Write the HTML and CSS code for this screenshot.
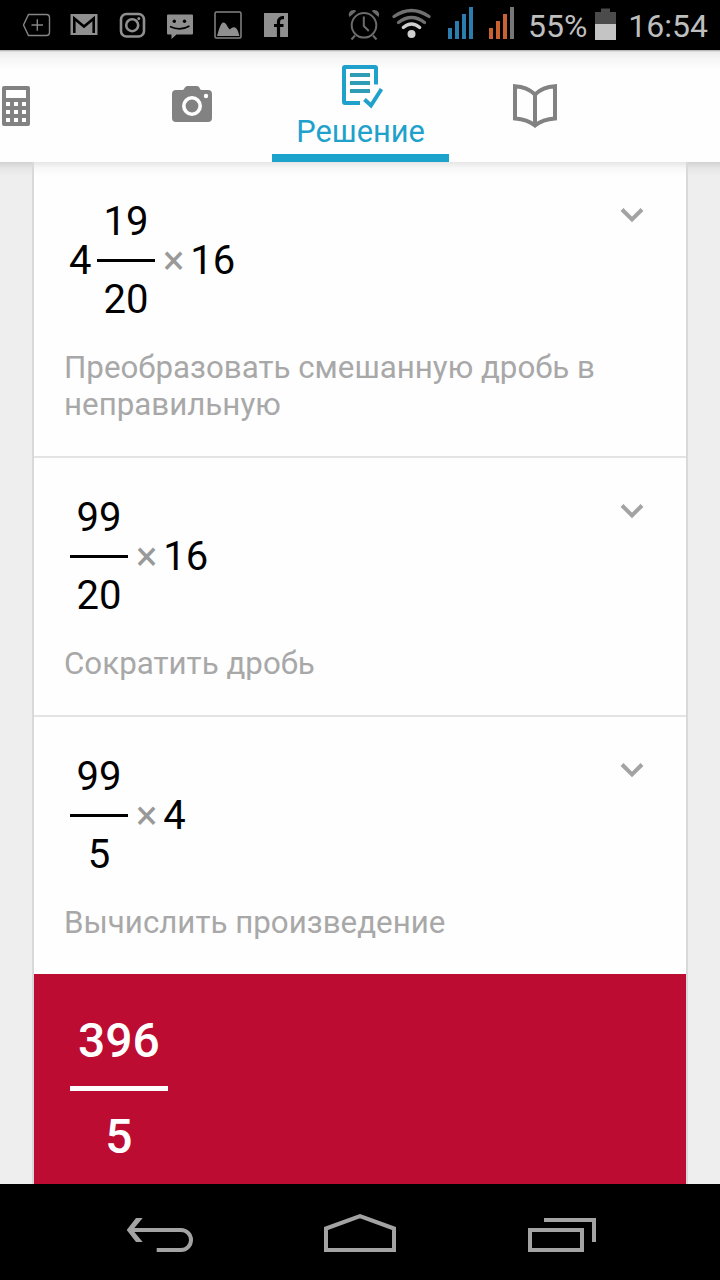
FILE: index.html
```html
<!DOCTYPE html>
<html lang="ru">
    <head>
        <meta charset="utf-8">
        <title>Решение</title>
        <link rel="stylesheet" href="styles.css">
    </head>

    <body>
        <div class="status">
            <div class="notifications">
                <svg width="48" height="50" fill="none" stroke="#858585" stroke-width="1.4">
                    <path d="M16.5 14.5H34.5a3 3 0 0 1 3 3V32.5a3 3 0 0 1-3 3H16.5L11.5 25Z"/>
                    <path d="M19.5 25h11.5M25.3 19.3v11.5"/>
                </svg>
                <svg width="48" height="50">
                    <path d="M10.5 14h27v21h-27z" fill="#8f8f8f"/>
                    <path d="M14.3 33V18.5L24 26.5 33.7 18.5V33" fill="none" stroke="#000" stroke-width="2.6"/>
                </svg>
                <svg width="48" height="50" fill="none" stroke="#8f8f8f" stroke-width="2.6">
                    <rect x="13" y="14" width="23" height="22.5" rx="5.5"/>
                    <circle cx="24.2" cy="25.2" r="6"/>
                    <circle cx="30.8" cy="18.6" r="1.5" fill="#8f8f8f" stroke="none"/>
                </svg>
                <svg width="48" height="50">
                    <path d="M12 14.5h24a1 1 0 0 1 1 1V33.5a1 1 0 0 1-1 1H20.5L15.5 39V34.5H12a1 1 0 0 1-1-1V15.5a1 1 0 0 1 1-1z" fill="#8f8f8f"/>
                    <circle cx="18.3" cy="21.3" r="1.7"/>
                    <circle cx="28.5" cy="21.3" r="1.7"/>
                    <path d="M14 26.5Q24 31.5 33.5 26" fill="none" stroke="#000" stroke-width="1.7"/>
                </svg>
                <svg width="48" height="50">
                    <rect x="11" y="12" width="26" height="26" rx="1.5" fill="none" stroke="#858585" stroke-width="1.5"/>
                    <path d="M13 36C15 30 16.5 22.5 19.5 22.5C22.5 22.5 23.5 28 26 29.5C27.5 28 29 27 31 27.5C33.5 28.5 34.5 32.5 35.5 36Z" fill="#8f8f8f"/>
                </svg>
                <svg width="48" height="50">
                    <path d="M12 13h24v24H12z" fill="#8f8f8f"/>
                    <path d="M32 17.7h-1.5a4 4 0 0 0-4 4V37M22 25.5h9.5" fill="none" stroke="#000" stroke-width="3.2"/>
                </svg>
            </div>

            <div class="system">
                <svg width="34" height="50" fill="none" stroke="#6b6b6b" stroke-width="2">
                    <circle cx="17" cy="25.3" r="12.3"/>
                    <path d="M16.8 16.5V26L21.8 31M8 35.5L4.500 39.500M26 35.500L29.500 39.500"/>
                    <path d="M2.5 17C.5 13.5 3 10 7 10c2 0 2.5.8 1.5 1.7zM31.5 17C33.5 13.5 31 10 27 10c-2 0-2.5.8-1.5 1.7z" fill="#6b6b6b" stroke="none"/>
                </svg>
                <svg class="wifi" width="41" height="50" fill="none" stroke-width="3.3" stroke-linecap="round">
                    <path d="M3 16.5Q20.5 4.5 38 16.5" stroke="#707070"/>
                    <path d="M7.5 22.5Q20.5 12.5 33.5 22.5" stroke="#707070"/>
                    <path d="M12.3 27.5Q20.5 20.5 28.7 27.5" stroke="#cfcfcf"/>
                    <circle cx="20.5" cy="34" r="4" fill="#cfcfcf"/>
                </svg>
                <svg class="signal" width="28" height="50" stroke="#2b7db0" stroke-width="4">
                    <path d="M3 28v11M10 21v18M17 14v25M24 7v32"/>
                </svg>
                <svg class="signal" width="28" height="50" stroke="#c9622f" stroke-width="4">
                    <path d="M3 28v11M10 21v18M17 14v25"/>
                    <path d="M24 7v32" stroke="#777"/>
                </svg>
                <span class="percent">55%</span>
                <svg class="battery" width="21" height="50">
                    <path d="M0 24V12h6V8.5h9V12h6v12z" fill="#4b4b4b"/>
                    <path d="M0 24h21v16H0z" fill="#c4c4c4"/>
                </svg>
                <span class="clock">16:54</span>
            </div>
        </div>

        <div class="tabs">
            <div class="tab tab-calc">
                <svg width="28" height="40">
                    <rect width="28" height="40" rx="2" fill="#828282"/>
                    <path d="M4 4h20v8H4zM4 16h4v4H4zM12 16h4v4h-4zM20 16h4v4h-4zM4 24h4v4H4zM12 24h4v4h-4zM20 24h4v4h-4zM4 32h4v4H4zM12 32h4v4h-4zM20 32h4v4h-4z" fill="#fff"/>
                </svg>
            </div>
            <div class="tab tab-camera">
                <svg width="40" height="36">
                    <path d="M4 4H10.5C12.5 4 12.5 0 15.5 0H25C28 0 27.5 4 29.5 4H36a4 4 0 0 1 4 4V32a4 4 0 0 1-4 4H4a4 4 0 0 1-4-4V8a4 4 0 0 1 4-4z" fill="#828282"/>
                    <circle cx="20" cy="20" r="8.2" fill="none" stroke="#fff" stroke-width="3.6"/>
                    <circle cx="34" cy="10" r="2.2" fill="#fff"/>
                </svg>
            </div>
            <div class="tab tab-solution">
                <svg width="42" height="46" fill="none" stroke="#20a1cb" stroke-width="4">
                    <path d="M35 20.5V4a1 1 0 0 0-1-1H4a1 1 0 0 0-1 1V38a1 1 0 0 0 1 1H19"/>
                    <path d="M9 11h20M9 19h20M9 27h20" stroke="#2f9db5"/>
                    <path d="M23.5 35.5L30 41.5L40.5 25"/>
                </svg>
                <span>Решение</span>
            </div>
            <div class="tab tab-book">
                <svg width="44" height="44" fill="none" stroke="#828282" stroke-width="4">
                    <path d="M22 10.5C17 5.5 9 2.5 2 2.2V34.5C9 35 17 37.5 22 41.5C27 37.5 35 35 42 34.5V2.2C35 2.5 27 5.5 22 10.5V41.5"/>
                </svg>
            </div>
        </div>

        <div class="content">
            <div class="card">
                <div class="step">
                    <div class="step-top">
                        <div class="math">
                            <span class="whole">4</span>
                            <div class="fraction">
                                <span class="num">19</span>
                                <span class="den">20</span>
                            </div>
                            <span class="times">×</span>
                            <span>16</span>
                        </div>
                        <svg class="chevron" width="24" height="16"><path d="M2 2.5L12 12.5L22 2.5"/></svg>
                    </div>
                    <p class="hint">Преобразовать смешанную дробь в неправильную</p>
                </div>

                <div class="step">
                    <div class="step-top">
                        <div class="math">
                            <div class="fraction">
                                <span class="num">99</span>
                                <span class="den">20</span>
                            </div>
                            <span class="times">×</span>
                            <span>16</span>
                        </div>
                        <svg class="chevron" width="24" height="16"><path d="M2 2.5L12 12.5L22 2.5"/></svg>
                    </div>
                    <p class="hint">Сократить дробь</p>
                </div>

                <div class="step">
                    <div class="step-top">
                        <div class="math">
                            <div class="fraction">
                                <span class="num">99</span>
                                <span class="den">5</span>
                            </div>
                            <span class="times">×</span>
                            <span>4</span>
                        </div>
                        <svg class="chevron" width="24" height="16"><path d="M2 2.5L12 12.5L22 2.5"/></svg>
                    </div>
                    <p class="hint">Вычислить произведение</p>
                </div>

                <div class="result">
                    <div class="fraction">
                        <span class="num">396</span>
                        <span class="den">5</span>
                    </div>
                </div>
            </div>
        </div>

        <div class="navbar">
            <svg width="72" height="40">
                <path d="M5 17H57a10 10 0 0 1 0 20H32.7" fill="none" stroke="#a3a3a3" stroke-width="4"/>
                <path d="M2.7 17L12 5h6.7L8.7 17l10 12H12z" fill="#a3a3a3"/>
            </svg>
            <svg width="72" height="40" fill="none" stroke="#a3a3a3" stroke-width="4">
                <path d="M2 37V15.5L36 3.2L70 15.5V37Z"/>
            </svg>
            <svg width="72" height="40" fill="none" stroke="#a3a3a3" stroke-width="4">
                <path d="M6 17H58V37H6ZM20 7H70V29"/>
            </svg>
        </div>
    </body>
</html>
```

FILE: styles.css
```css
body{
    margin: 0;
    width: 720px;
    height: 1280px;
    display: flex;
    flex-direction: column;
    overflow: hidden;
    background-color: #eeeeee;
    font-family: Roboto, "Noto Sans", sans-serif;
}

svg{
    display: block;
    flex: none;
}

/* status bar */
.status{
    height: 50px;
    flex: none;
    display: flex;
    justify-content: space-between;
    padding: 0 12px;
    background-color: #000;
    color: #bebebe;
    font-size: 32px;
    line-height: 53px;
}

.notifications, .system{
    display: flex;
}

.wifi{
    margin-left: 10px;
}

.signal{
    margin-left: 13px;
}

.wifi + .signal{
    margin-left: 15px;
}

.percent{
    margin-left: 12px;
}

.battery{
    margin: 0 12px 0 8px;
}

/* tabs */
.tabs{
    height: 112px;
    flex: none;
    display: flex;
    background: linear-gradient(#a8a8a8, #ececec 2px, #f6f6f6 9px, #fefefe 20px);
}

.tab{
    display: flex;
    justify-content: center;
    box-sizing: border-box;
}

.tab-calc{
    width: 112px;
    justify-content: flex-start;
    padding: 36px 0 0 2px;
}

.tab-camera{
    width: 160px;
    padding-top: 36px;
}

.tab-solution{
    width: 177px;
    flex-direction: column;
    align-items: center;
    justify-content: flex-start;
    padding-top: 14px;
    border-bottom: 8px solid #1ca3cc;
    color: #20a1cb;
    font-size: 30.8px;
    line-height: 43px;
}

.tab-solution svg{
    margin-left: 3px;
}

.tab-book{
    width: 172px;
    padding-top: 34px;
}

/* solution steps */
.content{
    height: 1022px;
    padding: 0 32px;
    background: linear-gradient(rgba(0,0,0,0.12), rgba(0,0,0,0.04) 6px, transparent 14px);
}

.card{
    height: 1022px;
    border: solid #d9d9d9;
    border-width: 0 2px;
    background: linear-gradient(#e6e6e6, #f7f7f7 6px, #fefefe 14px);
}

.step{
    box-sizing: border-box;
    height: 259px;
    padding: 36px 30px 0 36px;
    border-bottom: 2px solid #e3e3e3;
}

.step:first-child{
    height: 296px;
}

.step:nth-child(3){
    height: 257px;
    border-bottom: none;
}

.step-top{
    display: flex;
    justify-content: space-between;
}

.math{
    display: flex;
    align-items: center;
    font-size: 40px;
    line-height: 47px;
    color: #000;
}

.whole{
    margin: 0 5.5px 0 -1px;
}

.fraction{
    display: flex;
    flex-direction: column;
    align-items: center;
}

.num{
    padding: 0 6.5px 14px;
    border-bottom: 3px solid #000;
}

.den{
    padding-top: 14px;
}

.times{
    color: #999;
    margin: 0 6px 0 8px;
}

.chevron{
    margin: 9px 12px 0 0;
    fill: none;
    stroke: #a3a3a3;
    stroke-width: 4;
}

.hint{
    margin: 26px 0 0 -6px;
    color: #a8a8a8;
    font-size: 31.3px;
    line-height: 37px;
}

.result{
    height: 210px;
    box-sizing: border-box;
    padding: 39px 36px 0;
    display: flex;
    align-items: flex-start;
    background-color: #bd0c32;
    color: #fff;
    font-size: 48px;
    font-weight: 500;
    line-height: 56px;
}

.result .num{
    padding: 0 8px 17px;
    border-bottom: 5px solid #fff;
}

.result .den{
    padding-top: 18px;
}

/* navigation buttons */
.navbar{
    height: 96px;
    flex: none;
    box-sizing: border-box;
    padding-top: 29px;
    display: flex;
    justify-content: center;
    gap: 128px;
    background-color: #000;
}
```
